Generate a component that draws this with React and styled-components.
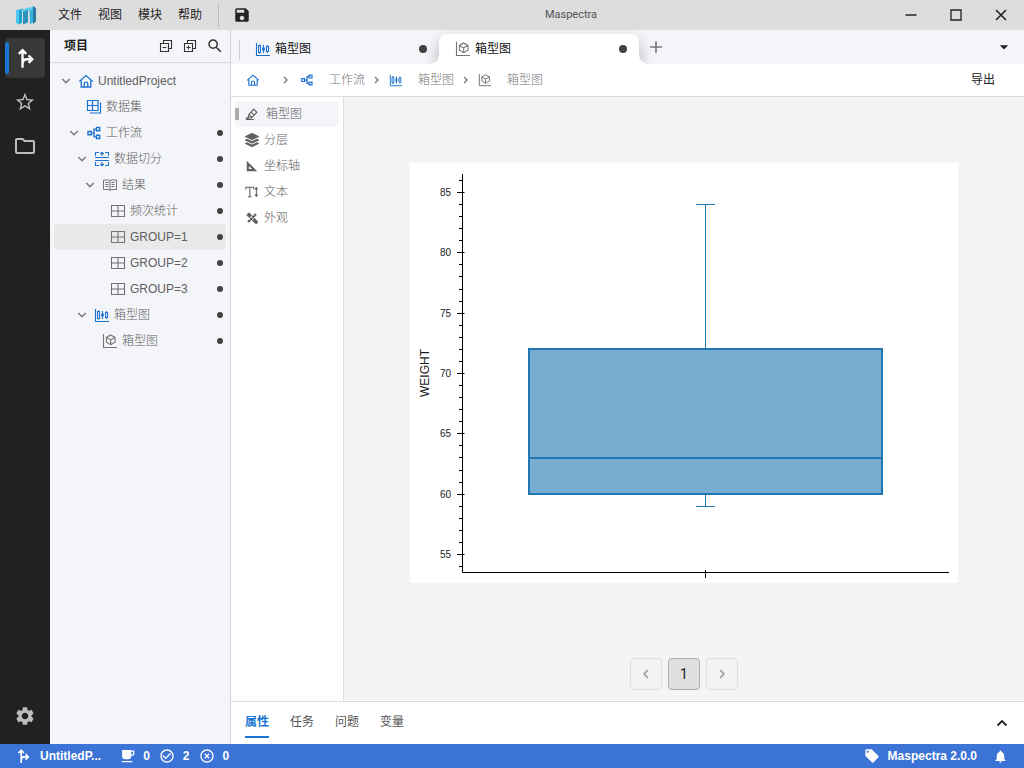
import React, { useState } from "react";
import styled, { createGlobalStyle } from "styled-components";
import {
  MdSave,
  MdStarBorder,
  MdOutlineFolder,
  MdSettings,
  MdSearch,
  MdLocalOffer,
  MdNotifications,
  MdCheckCircleOutline,
  MdHighlightOff,
  MdArrowDropDown,
  MdAdd,
} from "react-icons/md";
import { FaLayerGroup } from "react-icons/fa";

const GlobalStyle = createGlobalStyle`
  * {
    box-sizing: border-box;
  }
  body {
    margin: 0;
    font-family: "Liberation Sans", "Noto Sans CJK SC", sans-serif;
    font-size: 12px;
    line-height: 16px;
    color: #222;
  }
  button {
    font: inherit;
    color: inherit;
    background: none;
    border: none;
    padding: 0;
    cursor: pointer;
  }
  a {
    color: inherit;
    text-decoration: none;
  }
  svg {
    display: block;
    flex-shrink: 0;
  }
`;

const Page = styled.div`
  display: flex;
  flex-direction: column;
  height: 100vh;
`;
const TitleBar = styled.header`
  display: grid;
  grid-template-columns: 1fr auto 1fr;
  align-items: center;
  height: 30px;
  background: #ddd;
`;
const Menu = styled.nav`
  display: flex;
  align-items: center;
  padding-left: 16px;
`;
const MenuItems = styled.div`
  display: flex;
  gap: 16px;
  padding: 0 16px 0 22px;
`;
const SaveButton = styled.button`
  display: flex;
  align-items: center;
  height: 24px;
  padding-left: 14px;
  border-left: 1px solid #bbb;
`;
const AppName = styled.div`
  font-family: Roboto, sans-serif;
  font-size: 11px;
  color: #555;
  padding-left: 118px;
`;
const WindowButtons = styled.div`
  display: flex;
  justify-content: flex-end;
  padding-right: 1px;
`;
const WindowButton = styled.button`
  display: grid;
  place-items: center;
  width: 45px;
  height: 30px;
`;
const Body = styled.div`
  display: flex;
  flex: 1;
  min-height: 0;
`;
const Rail = styled.nav`
  display: flex;
  flex-direction: column;
  align-items: center;
  gap: 4px;
  width: 50px;
  padding: 8px 5px;
  background: #212121;
`;
const RailButton = styled.button`
  display: grid;
  place-items: center;
  position: relative;
  width: 40px;
  height: 40px;
  border-radius: 4px;
  color: ${(p) => (p.$active ? "#fff" : "#bdbdbd")};
  background: ${(p) => (p.$active ? "#383838" : "transparent")};
  &:last-child {
    margin-top: auto;
  }
  &::before {
    content: "";
    display: ${(p) => (p.$active ? "block" : "none")};
    position: absolute;
    left: 0;
    top: 4px;
    bottom: 4px;
    width: 4px;
    border-radius: 2px;
    background: #1976d2;
  }
`;
const Sidebar = styled.aside`
  width: 181px;
  background: #f4f5f8;
  border-right: 1px solid #d4d4d6;
`;
const SidebarHead = styled.div`
  display: flex;
  align-items: center;
  gap: 8px;
  height: 33px;
  padding: 0 6px 0 14px;
  border-bottom: 1px solid #d9d9db;
  color: #333;
`;
const SidebarTitle = styled.h2`
  flex: 1;
  margin: 0;
  font-size: 12px;
  font-weight: 600;
  color: #222;
`;
const Tree = styled.ul`
  list-style: none;
  margin: 0;
  padding: 5px 4px;
`;
const TreeRow = styled.li`
  display: flex;
  align-items: center;
  gap: 4px;
  height: 26px;
  padding-right: 3px;
  padding-left: ${(p) => 4 + p.$level * 8}px;
  border-radius: 4px;
  color: #606060;
  font-weight: 300;
  background: ${(p) => (p.$active ? "#e9e9e9" : "transparent")};
`;
const TreeLabel = styled.span`
  flex: 1;
  white-space: nowrap;
`;
const IconBox = styled.span`
  display: grid;
  place-items: center;
  width: 16px;
  height: 16px;
  color: ${(p) => (p.$blue ? "#1a73d0" : "#757575")};
`;
const Dot = styled.span`
  width: ${(p) => p.$size}px;
  height: ${(p) => p.$size}px;
  border-radius: 50%;
  background: #424242;
`;
const Main = styled.main`
  display: flex;
  flex-direction: column;
  flex: 1;
  min-width: 0;
  background: #fff;
`;
const TabBar = styled.div`
  display: flex;
  align-items: flex-end;
  height: 34px;
  padding: 0 12px 0 8px;
  background: #f4f5f8;
  overflow: hidden;
`;
const Tab = styled.button`
  display: flex;
  align-items: center;
  gap: 4px;
  position: relative;
  width: 200px;
  height: 30px;
  padding: 0 12px 0 16px;
  border-radius: 8px 8px 0 0;
  background: ${(p) => (p.$active ? "#fff" : "transparent")};
  box-shadow: ${(p) => (p.$active ? "0 8px 16px rgba(0, 0, 0, 0.3)" : "none")};
  color: #111;
  &::before {
    content: "";
    display: ${(p) => (p.$first ? "block" : "none")};
    position: absolute;
    left: 0;
    top: 6px;
    width: 1px;
    height: 20px;
    background: #d0d0d0;
  }
`;
const TabLabel = styled.span`
  flex: 1;
  text-align: left;
`;
const Flare = styled.span`
  position: absolute;
  bottom: 0;
  width: 8px;
  height: 8px;
  ${(p) => (p.$side === "left" ? "left: -8px;" : "right: -8px;")}
  background: radial-gradient(
    circle at ${(p) => (p.$side === "left" ? "0 0" : "100% 0")},
    transparent 7px,
    #fff 8px
  );
`;
const AddTab = styled.button`
  display: grid;
  place-items: center;
  align-self: center;
  width: 34px;
  height: 24px;
  color: #777;
`;
const TabMenu = styled.button`
  align-self: center;
  margin-left: auto;
  margin-right: -2px;
`;
const PathBar = styled.div`
  display: flex;
  align-items: center;
  justify-content: space-between;
  height: 33px;
  padding: 0 29px 0 14px;
  border-bottom: 1px solid #ddd;
`;
const Crumbs = styled.nav`
  display: flex;
  align-items: center;
  color: #777;
  font-weight: 300;
`;
const Crumb = styled.a`
  display: flex;
  align-items: center;
  gap: 14px;
  svg {
    width: 14px;
    height: 14px;
  }
`;
const CrumbSplit = styled.span`
  display: grid;
  place-items: center;
  width: ${(p) => (p.$wide ? 38 : 23)}px;
  padding-left: ${(p) => (p.$wide ? 12 : 0)}px;
`;
const Workspace = styled.div`
  display: flex;
  flex: 1;
  min-height: 0;
  padding-bottom: 1px;
`;
const Tools = styled.div`
  width: 113px;
  padding: 4px;
  border-right: 1px solid #ddd;
`;
const Tool = styled.button`
  display: flex;
  align-items: center;
  gap: ${(p) => (p.$active ? 7 : 5)}px;
  position: relative;
  width: 100%;
  height: 26px;
  padding-left: 10px;
  border-radius: 4px;
  color: #606060;
  font-weight: 300;
  background: ${(p) => (p.$active ? "#f4f5f8" : "transparent")};
  &::before {
    content: "";
    display: ${(p) => (p.$active ? "block" : "none")};
    position: absolute;
    left: 0;
    top: 7px;
    width: 4px;
    height: 12px;
    border-radius: 1px;
    background: #aaa;
  }
`;
const Stage = styled.section`
  display: flex;
  flex-direction: column;
  align-items: center;
  flex: 1;
  min-width: 0;
  padding-bottom: 10px;
  background: #f4f4f4;
`;
const SheetArea = styled.div`
  display: grid;
  place-items: center;
  flex: 1;
  padding-bottom: 10px;
`;
const Sheet = styled.div`
  background: #fff;
`;
const Pager = styled.nav`
  display: flex;
  gap: 6px;
`;
const PageButton = styled.button`
  display: grid;
  place-items: center;
  width: 32px;
  height: 32px;
  border: 1px solid ${(p) => (p.$active ? "#aaa" : "#e0e0e0")};
  border-radius: 4px;
  background: ${(p) => (p.$active ? "#e0e0e0" : "transparent")};
  color: ${(p) => (p.$active ? "#222" : "#aaa")};
  font-family: Roboto, sans-serif;
  font-size: 14px;
`;
const Drawer = styled.section`
  display: flex;
  align-items: center;
  height: 43px;
  padding: 0 14px;
  border-top: 1px solid #ddd;
`;
const DrawerTab = styled.button`
  height: 30px;
  margin-right: 21px;
  border-bottom: 2px solid ${(p) => (p.$active ? "#1976d2" : "transparent")};
  color: ${(p) => (p.$active ? "#1976d2" : "#555")};
  font-weight: ${(p) => (p.$active ? 600 : 400)};
`;
const DrawerToggle = styled.button`
  margin-left: auto;
`;
const StatusBar = styled.footer`
  display: flex;
  align-items: center;
  height: 24px;
  padding: 0 16px 0 15px;
  background: #3b73d6;
  color: #fff;
  font-weight: 700;
`;
const ProjectName = styled.span`
  margin-left: 9px;
  margin-right: 20px;
  white-space: nowrap;
`;
const Count = styled.span`
  display: flex;
  align-items: center;
  gap: 8px;
  margin-right: 9px;
`;
const Version = styled.span`
  display: flex;
  align-items: center;
  gap: 8px;
  margin-left: auto;
  margin-right: 16px;
`;

function Svg({ w = 16, h = 16, box = "0 0 16 16", sw = 1, children }) {
  return (
    <svg width={w} height={h} viewBox={box} fill="none" stroke="currentColor" strokeWidth={sw} aria-hidden="true">
      {children}
    </svg>
  );
}

const Logo = () => (
  <svg width="20" height="19" viewBox="0 0 20 19" aria-hidden="true">
    <path d="M0 4.500l3 .5v13.500l-3-1.500z" fill="#4cc9ec" />
    <path d="M3 5l3-1.500V16.500l-3 2z" fill="#1f9fd0" />
    <path d="M0 4.500L6 2.500l2 1L3 5.500z" fill="#35b4de" />
    <path d="M7 4.500L12 2v14.500l-5 2z" fill="#2a94bd" />
    <path d="M7 4.500L12.500 1l1 2L8 6z" fill="#4cc9ec" />
    <path d="M13.500 3.500L17 2v14l-3 2.500z" fill="#35b4de" />
    <path d="M12 3l5-3v3l-4 2z" fill="#5fd0ee" />
    <path d="M17 0l3 2v13.500l-3 2.500z" fill="#2b7ba0" />
  </svg>
);
const ForkIcon = ({ size = 22 }) => (
  <Svg w={size} h={size} sw={1.7}>
    <path d="M6.200 15V2.500M3.500 5l2.700-2.700L8.900 5M6.200 12.500c0-2.500 1-3.600 3-3.600h3.800M10.600 6.200l2.700 2.700-2.700 2.700" />
  </Svg>
);
const Chevron = ({ d = "M4.300 6l3.700 3.700L11.700 6", sw = 1.4 }) => (
  <Svg sw={sw}>
    <path d={d} />
  </Svg>
);
const HomeIcon = () => (
  <Svg sw={1.300}>
    <path d="M1.300 8.500L8 2.500l6.700 6M3.200 7.500V14h9.600V7.500M6.200 14v-3a1.800 1.800 0 0 1 3.600 0v3" />
  </Svg>
);
const DatasetIcon = () => (
  <Svg sw={1.2}>
    <path d="M1.500 1.500h10.500v10H1.500zM1.500 6.500H12M6.500 1.500v10M14.500 3.500v10.500H4" />
  </Svg>
);
const FlowIcon = () => (
  <Svg sw={1.4}>
    <path d="M2 6.500h3.200v3.200H2zM10.500 2.500h3.200v3.200h-3.200zM10.500 10.300h3.200v3.200h-3.200zM5.200 8.100H8M10.500 4.100H8v7.800h2.500" />
  </Svg>
);
const SplitIcon = () => (
  <Svg sw={1.1}>
    <path d="M1 6.500h14M1 9.500h14M1.500 5V1.500H5M11 1.500h3.500V5M1.500 11v3.500H5M11 14.500h3.500V11M8 5V1.500M6.300 3L8 1.300 9.700 3M8 11v3.500M6.300 13L8 14.700 9.700 13" />
  </Svg>
);
const BookIcon = () => (
  <Svg>
    <path d="M1.500 3H6q2 0 2 1.500Q8 3 10 3h4.500v9.500H10q-2 0-2 1 0-1-2-1H1.500zM8 4.500v9M3.500 5.500h3M3.500 7.500h3M3.500 9.500h3M9.500 5.500h3M9.500 7.500h3M9.500 9.500h3" />
  </Svg>
);
const TableIcon = () => (
  <Svg sw={1.1}>
    <path d="M1.500 2.500h13v11h-13zM1.500 8h13M8 2.500v11" />
  </Svg>
);
const BoxPlotIcon = () => (
  <Svg sw={1.1}>
    <path d="M1.500 2v12.500H15M3.500 4.500h2v7h-2zM4.500 3.500v1M4.500 11.500v1M8.500 4v8M7.500 8l1-2 1 2-1 2zM11.500 5.500h2v5h-2zM12.500 4v1.500M12.500 10.500V12" />
  </Svg>
);
const CubeIcon = () => (
  <Svg sw={1.1}>
    <path d="M1.500 1v13.500H15" />
    <path d="M8.700 2l4.300 2.400v4.800l-4.300 2.500-4.300-2.500V4.400zM4.400 4.400l4.300 2.500L13 4.400M8.700 6.900v4.800" />
  </Svg>
);
const StackIcon = ({ plus }) => (
  <Svg sw={1.1}>
    <path d="M2.500 5.500h8v8h-8zM5.500 5.500v-3h8v8h-3" />
    <path d={plus ? "M4.500 9.500h4M6.500 7.500v4" : "M4.500 9.500h4"} />
  </Svg>
);
const PenIcon = () => (
  <Svg w={14} h={14} sw={1.3}>
    <path d="M4.500 8.500l5.500-6 3.500 3.500-5.500 6-4.500 1zM4.500 8.500L8 12M7 5.800l3.500 3.500M1 14l3.500-3.500M1 14.300h9" />
  </Svg>
);
const RulerIcon = () => (
  <Svg w={14} h={14} sw={0}>
    <path d="M2 2l12 12H2zM4.500 8v3.500H8z" fill="currentColor" fillRule="evenodd" />
  </Svg>
);
const TextIcon = () => (
  <Svg w={14} h={14} sw={1.2}>
    <path d="M1 5V2.500h9V5M5.500 2.500v11M3.500 13.500h4M13 3v10M11.500 5L13 3l1.500 2M11.500 11l1.500 2 1.500-2" />
  </Svg>
);
const LookIcon = () => (
  <Svg w={14} h={14}>
    <path d="M2 4.500L4.500 2 14 11.500V14h-2.500z" fill="currentColor" />
    <path d="M2 11.500L11.500 2 14 4.500 4.500 14z" fill="currentColor" stroke="#fff" />
    <path d="M4.500 9l1.500 1.500M7 6.500L8.500 8M9.500 4L11 5.500" stroke="#fff" />
  </Svg>
);
const CupIcon = () => (
  <Svg w={14} h={14} sw={1.5}>
    <path d="M2 2h9v6q0 3-3 3H5q-3 0-3-3z" fill="currentColor" />
    <path d="M11 2.500h3.500V6q0 1-1.500 1h-2M1 14.500h12" />
  </Svg>
);

const treeItems = [
  { label: "UntitledProject", level: 0, icon: HomeIcon, blue: true, open: true },
  { label: "数据集", level: 1, icon: DatasetIcon, blue: true },
  { label: "工作流", level: 1, icon: FlowIcon, blue: true, open: true, dirty: true },
  { label: "数据切分", level: 2, icon: SplitIcon, blue: true, open: true, dirty: true },
  { label: "结果", level: 3, icon: BookIcon, open: true, dirty: true },
  { label: "频次统计", level: 4, icon: TableIcon, dirty: true },
  { label: "GROUP=1", level: 4, icon: TableIcon, dirty: true },
  { label: "GROUP=2", level: 4, icon: TableIcon, dirty: true },
  { label: "GROUP=3", level: 4, icon: TableIcon, dirty: true },
  { label: "箱型图", level: 2, icon: BoxPlotIcon, blue: true, open: true, dirty: true },
  { label: "箱型图", level: 3, icon: CubeIcon, dirty: true },
];

const tools = [
  { label: "箱型图", icon: <PenIcon /> },
  { label: "分层", icon: <FaLayerGroup size={14} /> },
  { label: "坐标轴", icon: <RulerIcon /> },
  { label: "文本", icon: <TextIcon /> },
  { label: "外观", icon: <LookIcon /> },
];

const stats = { min: 59, q1: 60, median: 63, q3: 72, max: 84 };

function BoxPlot() {
  const y = (v) => Math.round(29 + ((85 - v) * 362) / 30);
  const ticks = [];
  for (let v = 54; v <= 86; v++) ticks.push(v);
  return (
    <svg width="548" height="420" viewBox="0 0 548 420" role="img" aria-label="WEIGHT">
      <g stroke="#000">
        <path d="M52.500 11V409.500H539M295.500 407v8" fill="none" />
        {ticks.map((v) => (
          <line key={v} x1={v % 5 ? 49 : 47} x2={v % 5 ? 53 : 54.5} y1={y(v) + 0.5} y2={y(v) + 0.5} />
        ))}
      </g>
      <g fontSize="10" textAnchor="end" fill="#222">
        {ticks
          .filter((v) => v % 5 === 0)
          .map((v) => (
            <text key={v} x="41" y={y(v) + 4}>
              {v}
            </text>
          ))}
      </g>
      <text fontSize="12" textAnchor="middle" fill="#222" transform="translate(19 210) rotate(-90)">
        WEIGHT
      </text>
      <rect
        x="119"
        y={y(stats.q3)}
        width="353"
        height={y(stats.q1) - y(stats.q3)}
        fill="#78acd1"
        stroke="#1f77b4"
        strokeWidth="2"
      />
      <rect x="119" y={y(stats.median)} width="353" height="2" fill="#1f77b4" />
      <rect x="295" y={y(stats.max)} width="1" height={y(stats.q3) - y(stats.max)} fill="#1f77b4" />
      <rect x="295" y={y(stats.q1)} width="1" height={y(stats.min) - y(stats.q1)} fill="#1f77b4" />
      <rect x="286" y={y(stats.max)} width="19" height="1" fill="#1f77b4" />
      <rect x="286" y={y(stats.min)} width="19" height="1" fill="#1f77b4" />
    </svg>
  );
}

function App() {
  const [selected, setSelected] = useState(6);
  const [tool, setTool] = useState(0);
  const [panel, setPanel] = useState("属性");

  return (
    <Page>
      <GlobalStyle />
      <TitleBar>
        <Menu>
          <Logo />
          <MenuItems>
            {["文件", "视图", "模块", "帮助"].map((m) => (
              <button key={m}>{m}</button>
            ))}
          </MenuItems>
          <SaveButton aria-label="保存">
            <MdSave size={18} />
          </SaveButton>
        </Menu>
        <AppName>Maspectra</AppName>
        <WindowButtons>
          <WindowButton aria-label="最小化">
            <Svg sw={1.5}><path d="M2.500 8h11" /></Svg>
          </WindowButton>
          <WindowButton aria-label="最大化">
            <Svg sw={1.3}><path d="M3 3h10v10H3z" /></Svg>
          </WindowButton>
          <WindowButton aria-label="关闭">
            <Svg sw={1.6}><path d="M3 3l10 10M13 3L3 13" /></Svg>
          </WindowButton>
        </WindowButtons>
      </TitleBar>

      <Body>
        <Rail>
          <RailButton $active aria-label="工作流"><ForkIcon /></RailButton>
          <RailButton aria-label="收藏"><MdStarBorder size={22} /></RailButton>
          <RailButton aria-label="文件"><MdOutlineFolder size={24} /></RailButton>
          <RailButton aria-label="设置"><MdSettings size={22} /></RailButton>
        </Rail>

        <Sidebar>
          <SidebarHead>
            <SidebarTitle>项目</SidebarTitle>
            <button aria-label="折叠"><StackIcon /></button>
            <button aria-label="展开"><StackIcon plus /></button>
            <button aria-label="搜索"><MdSearch size={18} /></button>
          </SidebarHead>
          <Tree>
            {treeItems.map((item, i) => (
              <TreeRow key={i} $level={item.level} $active={i === selected} onClick={() => setSelected(i)}>
                <IconBox>{item.open && <Chevron />}</IconBox>
                <IconBox $blue={item.blue}><item.icon /></IconBox>
                <TreeLabel>{item.label}</TreeLabel>
                {item.dirty && <Dot $size={6} />}
              </TreeRow>
            ))}
          </Tree>
        </Sidebar>

        <Main>
          <TabBar>
            <Tab $first>
              <IconBox $blue><BoxPlotIcon /></IconBox>
              <TabLabel>箱型图</TabLabel>
              <Dot $size={8} />
            </Tab>
            <Tab $active>
              <Flare $side="left" />
              <IconBox><CubeIcon /></IconBox>
              <TabLabel>箱型图</TabLabel>
              <Dot $size={8} />
              <Flare $side="right" />
            </Tab>
            <AddTab aria-label="新建"><MdAdd size={20} /></AddTab>
            <TabMenu aria-label="标签列表"><MdArrowDropDown size={20} /></TabMenu>
          </TabBar>

          <PathBar>
            <Crumbs>
              <Crumb href="#home" aria-label="首页"><IconBox $blue><HomeIcon /></IconBox></Crumb>
              <CrumbSplit $wide><Chevron d="M6 5l3 3-3 3" /></CrumbSplit>
              <Crumb href="#flow"><IconBox $blue><FlowIcon /></IconBox>工作流</Crumb>
              <CrumbSplit><Chevron d="M6 5l3 3-3 3" /></CrumbSplit>
              <Crumb href="#plot"><IconBox $blue><BoxPlotIcon /></IconBox>箱型图</Crumb>
              <CrumbSplit><Chevron d="M6 5l3 3-3 3" /></CrumbSplit>
              <Crumb href="#result"><IconBox><CubeIcon /></IconBox>箱型图</Crumb>
            </Crumbs>
            <button>导出</button>
          </PathBar>

          <Workspace>
            <Tools>
              {tools.map((t, i) => (
                <Tool key={t.label} $active={i === tool} onClick={() => setTool(i)}>
                  {t.icon}
                  {t.label}
                </Tool>
              ))}
            </Tools>
            <Stage>
              <SheetArea>
                <Sheet><BoxPlot /></Sheet>
              </SheetArea>
              <Pager>
                <PageButton aria-label="上一页"><Chevron d="M10 4L6 8l4 4" sw={1.8} /></PageButton>
                <PageButton $active>1</PageButton>
                <PageButton aria-label="下一页"><Chevron d="M6 4l4 4-4 4" sw={1.8} /></PageButton>
              </Pager>
            </Stage>
          </Workspace>

          <Drawer>
            {["属性", "任务", "问题", "变量"].map((p) => (
              <DrawerTab key={p} $active={p === panel} onClick={() => setPanel(p)}>
                {p}
              </DrawerTab>
            ))}
            <DrawerToggle aria-label="展开面板"><Chevron d="M3.500 10.500L8 6l4.500 4.500" sw={1.8} /></DrawerToggle>
          </Drawer>
        </Main>
      </Body>

      <StatusBar>
        <ForkIcon size={16} />
        <ProjectName>UntitledP...</ProjectName>
        <Count><CupIcon />0</Count>
        <Count><MdCheckCircleOutline size={16} />2</Count>
        <Count><MdHighlightOff size={16} />0</Count>
        <Version><MdLocalOffer size={16} />Maspectra 2.0.0</Version>
        <MdNotifications size={15} />
      </StatusBar>
    </Page>
  );
}

export default App;
